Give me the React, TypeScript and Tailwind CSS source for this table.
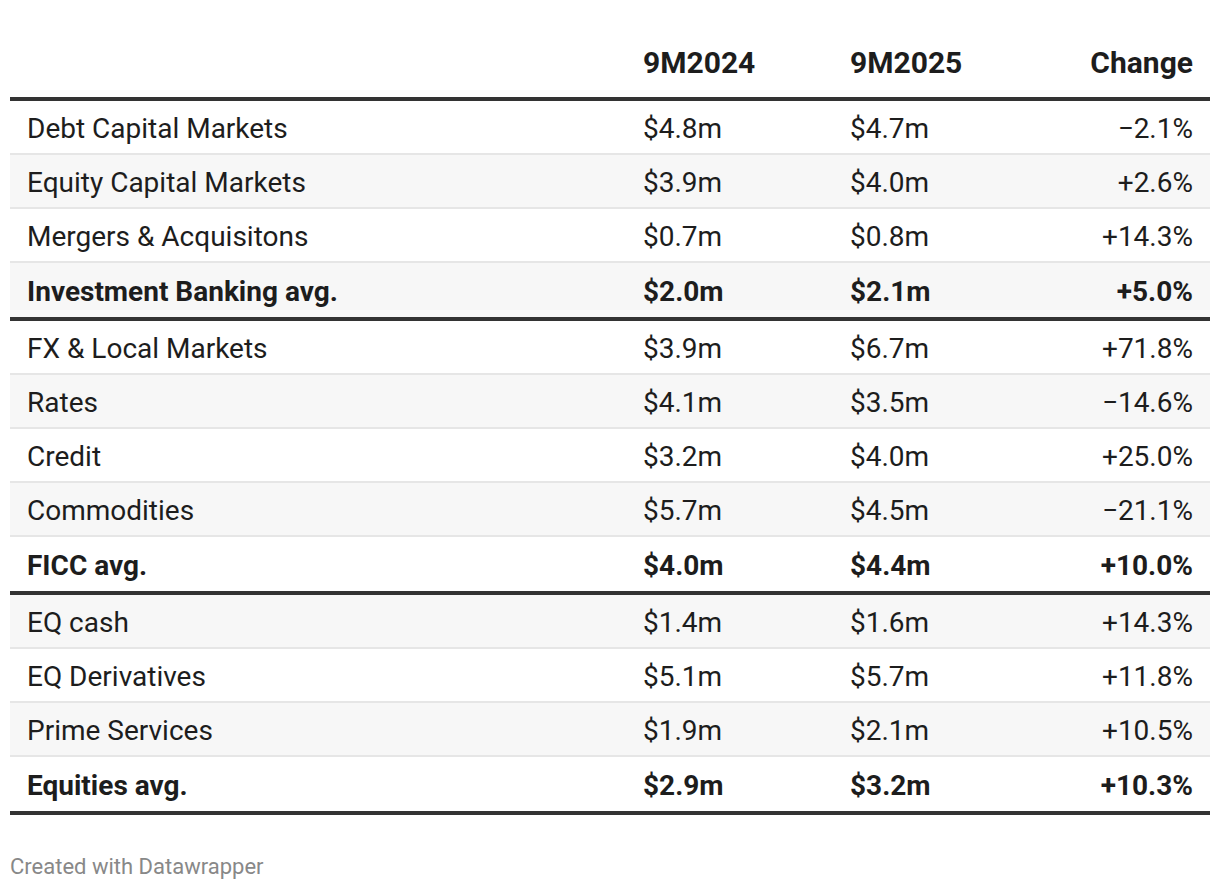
const rows = [
  { name: 'Debt Capital Markets', a: '$4.8m', b: '$4.7m', c: '−2.1%' },
  { name: 'Equity Capital Markets', a: '$3.9m', b: '$4.0m', c: '+2.6%' },
  { name: 'Mergers & Acquisitons', a: '$0.7m', b: '$0.8m', c: '+14.3%' },
  { name: 'Investment Banking avg.', a: '$2.0m', b: '$2.1m', c: '+5.0%', total: true },
  { name: 'FX & Local Markets', a: '$3.9m', b: '$6.7m', c: '+71.8%' },
  { name: 'Rates', a: '$4.1m', b: '$3.5m', c: '−14.6%' },
  { name: 'Credit', a: '$3.2m', b: '$4.0m', c: '+25.0%' },
  { name: 'Commodities', a: '$5.7m', b: '$4.5m', c: '−21.1%' },
  { name: 'FICC avg.', a: '$4.0m', b: '$4.4m', c: '+10.0%', total: true },
  { name: 'EQ cash', a: '$1.4m', b: '$1.6m', c: '+14.3%' },
  { name: 'EQ Derivatives', a: '$5.1m', b: '$5.7m', c: '+11.8%' },
  { name: 'Prime Services', a: '$1.9m', b: '$2.1m', c: '+10.5%' },
  { name: 'Equities avg.', a: '$2.9m', b: '$3.2m', c: '+10.3%', total: true },
];

const cols = 'grid grid-cols-[616px_207px_207px_170px]';

export default function App() {
  return (
    <div className="w-[1220px] h-[890px] bg-white px-[10px] font-['Roboto',sans-serif] text-[#1d1d1d]">
      {/* Header */}
      <div className={`${cols} h-[101px] items-end pb-[17px] border-b-4 border-[#333] text-[30px] leading-[34px] font-bold`}>
        <div />
        <div className="pl-[17px]">9M2024</div>
        <div className="pl-[17px]">9M2025</div>
        <div className="pr-[17px] text-right">Change</div>
      </div>

      {/* Body */}
      {rows.map((r, i) => (
        <div
          key={r.name}
          className={`${cols} items-center pt-[3px] text-[28px] leading-[32px] ${
            r.total ? 'h-[58px] border-b-4 border-[#333] font-bold' : 'h-[54px] border-b-2 border-[#e6e6e6]'
          } ${i % 2 === 1 ? 'bg-[#f7f7f7]' : 'bg-white'}`}
        >
          <div className="pl-[17px]">{r.name}</div>
          <div className="pl-[17px]">{r.a}</div>
          <div className="pl-[17px]">{r.b}</div>
          <div className="pr-[17px] text-right">{r.c}</div>
        </div>
      ))}

      <div className="mt-[39px] text-[22px] leading-[26px] text-[#888]">Created with Datawrapper</div>
    </div>
  );
}
